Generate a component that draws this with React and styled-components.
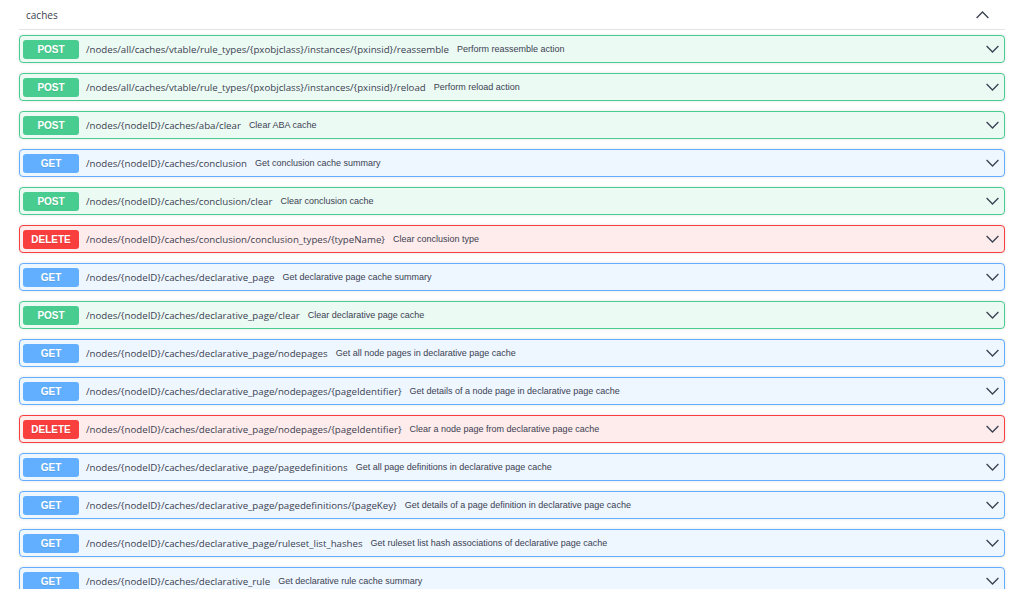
import React from 'react';
import styled, { createGlobalStyle } from 'styled-components';

const Global = createGlobalStyle`
  body {
    margin: 0;
    background: #fff;
    font-family: "Open Sans", "Liberation Sans", sans-serif;
  }
`;

const colors = {
  POST: { main: '#49cc90', bg: '#ecfaf4' },
  GET: { main: '#61affe', bg: '#eef6ff' },
  DELETE: { main: '#f93e3e', bg: '#feebeb' },
};

const Page = styled.div`
  padding: 0 19px;
  height: 589px;
  overflow: hidden;
`;

const TagHeader = styled.div`
  display: flex;
  align-items: center;
  justify-content: space-between;
  height: 29px;
  border-bottom: 1px solid #e3e3e3;
  padding: 0 16px 0 7px;
  margin-bottom: 5px;
  color: #3b4151;
  font-size: 10px;
`;

const Op = styled.div`
  display: flex;
  align-items: center;
  height: 26px;
  margin-bottom: 10px;
  padding: 0 5px 0 3px;
  border: 1px solid ${(p) => colors[p.method].main};
  background: ${(p) => colors[p.method].bg};
  border-radius: 4px;
  box-shadow: 0 0 3px rgba(0, 0, 0, 0.12);
`;

const Badge = styled.span`
  flex: none;
  width: 56px;
  height: 19px;
  display: flex;
  align-items: center;
  justify-content: center;
  border-radius: 3px;
  background: ${(p) => colors[p.method].main};
  color: #fff;
  font-family: "Liberation Sans", Arial, sans-serif;
  font-weight: 700;
  font-size: 10px;
  text-shadow: 0 1px 0 rgba(0, 0, 0, 0.1);
`;

const Path = styled.span`
  margin-left: 7px;
  color: #3b4151;
  font-size: 9.7px;
  white-space: nowrap;
`;

const Summary = styled.span`
  margin-left: 8px;
  flex: 1;
  color: #3b4151;
  font-family: "Liberation Sans", Arial, sans-serif;
  font-size: 9px;
  white-space: nowrap;
`;

const Chevron = ({ up }) => (
  <svg width="13" height="8" viewBox="0 0 13 8" fill="none" stroke="#3b4151" strokeWidth="1.3">
    <path d={up ? 'M0.6 7 L6.5 1 L12.4 7' : 'M0.6 1 L6.5 7 L12.4 1'} />
  </svg>
);

const ops = [
  ['POST', '/nodes/all/caches/vtable/rule_types/{pxobjclass}/instances/{pxinsid}/reassemble', 'Perform reassemble action'],
  ['POST', '/nodes/all/caches/vtable/rule_types/{pxobjclass}/instances/{pxinsid}/reload', 'Perform reload action'],
  ['POST', '/nodes/{nodeID}/caches/aba/clear', 'Clear ABA cache'],
  ['GET', '/nodes/{nodeID}/caches/conclusion', 'Get conclusion cache summary'],
  ['POST', '/nodes/{nodeID}/caches/conclusion/clear', 'Clear conclusion cache'],
  ['DELETE', '/nodes/{nodeID}/caches/conclusion/conclusion_types/{typeName}', 'Clear conclusion type'],
  ['GET', '/nodes/{nodeID}/caches/declarative_page', 'Get declarative page cache summary'],
  ['POST', '/nodes/{nodeID}/caches/declarative_page/clear', 'Clear declarative page cache'],
  ['GET', '/nodes/{nodeID}/caches/declarative_page/nodepages', 'Get all node pages in declarative page cache'],
  ['GET', '/nodes/{nodeID}/caches/declarative_page/nodepages/{pageIdentifier}', 'Get details of a node page in declarative page cache'],
  ['DELETE', '/nodes/{nodeID}/caches/declarative_page/nodepages/{pageIdentifier}', 'Clear a node page from declarative page cache'],
  ['GET', '/nodes/{nodeID}/caches/declarative_page/pagedefinitions', 'Get all page definitions in declarative page cache'],
  ['GET', '/nodes/{nodeID}/caches/declarative_page/pagedefinitions/{pageKey}', 'Get details of a page definition in declarative page cache'],
  ['GET', '/nodes/{nodeID}/caches/declarative_page/ruleset_list_hashes', 'Get ruleset list hash associations of declarative page cache'],
  ['GET', '/nodes/{nodeID}/caches/declarative_rule', 'Get declarative rule cache summary'],
];

const App = () => {
  return (
    <Page>
      <Global />
      <TagHeader>
        <span>caches</span>
        <Chevron up />
      </TagHeader>
      {ops.map(([m, path, summary], i) => (
        <Op key={i} method={m}>
          <Badge method={m}>{m}</Badge>
          <Path>{path}</Path>
          <Summary>{summary}</Summary>
          <Chevron />
        </Op>
      ))}
    </Page>
  );
};

export default App;
